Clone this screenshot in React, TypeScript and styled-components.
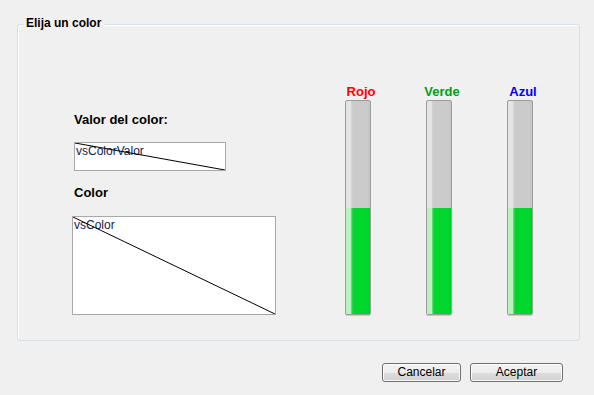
import React from "react";
import styled, { createGlobalStyle } from "styled-components";

const Global = createGlobalStyle`
  html, body { margin: 0; padding: 0; background: #f0f0f0; }
  body { font-family: "Liberation Sans", Arial, sans-serif; }
`;

const Page = styled.div`
  width: 594px;
  height: 395px;
  box-sizing: border-box;
  padding: 24px 0 0 17px;
  background: #f0f0f0;
  display: flex;
  flex-direction: column;
`;

const GroupBox = styled.div`
  position: relative;
  width: 563px;
  height: 317px;
  box-sizing: border-box;
  border: 1px solid #d5dfe5;
  border-radius: 3px;
  box-shadow: inset 1px 1px 0 #ffffff;
  display: flex;
  align-items: flex-start;
`;

const Legend = styled.div`
  position: absolute;
  left: 5px;
  top: -9px;
  padding: 0 3px;
  background: #f0f0f0;
  font-size: 12px;
  font-weight: bold;
  line-height: 15px;
  color: #000;
`;

const LeftColumn = styled.div`
  display: flex;
  flex-direction: column;
  align-items: flex-start;
  padding: 87px 0 0 54px;
`;

const FieldTitle = styled.div<{ $gap: number }>`
  margin: ${(p) => p.$gap}px 0 0 2px;
  font-size: 13px;
  font-weight: bold;
  line-height: 16px;
  color: #000;
`;

const DrawBox = styled.div<{ $w: number; $h: number; $indent: number; $gap: number }>`
  position: relative;
  width: ${(p) => p.$w}px;
  height: ${(p) => p.$h}px;
  box-sizing: border-box;
  margin: ${(p) => p.$gap}px 0 0 ${(p) => p.$indent}px;
  border: 1px solid #a8a8a8;
  background: #ffffff;
`;

const BoxText = styled.span`
  display: block;
  padding: 1px 0 0 1px;
  font-size: 12px;
  line-height: 14px;
  color: #14234a;
`;

const Diagonal = styled.svg`
  position: absolute;
  inset: 0;
  width: 100%;
  height: 100%;
`;

const Bars = styled.div`
  display: flex;
  gap: 55px;
  margin-left: 69px;
  padding-top: 59px;
`;

const BarColumn = styled.div`
  width: 26px;
  display: flex;
  flex-direction: column;
  align-items: center;
`;

const BarLabel = styled.div<{ $color: string }>`
  white-space: nowrap;
  font-size: 13px;
  font-weight: bold;
  line-height: 16px;
  color: ${(p) => p.$color};
  transform: translateX(3px);
`;

const BarTrack = styled.div`
  width: 26px;
  height: 215px;
  box-sizing: border-box;
  border: 1px solid #9c9c9c;
  border-radius: 2px;
  box-shadow: 0 1px 0 #c8c8c8;
  display: flex;
  flex-direction: column;
  overflow: hidden;
  background: linear-gradient(to right, #e4e4e4 0, #e4e4e4 5px, #d6d6d6 5px, #cbcbcb 7px, #cbcbcb 22px, #c2c2c2 100%);
`;

const BarEmpty = styled.div`
  flex: 1;
`;

const BarFill = styled.div`
  background: linear-gradient(to right, #b6f3bd 0, #b6f3bd 5px, #6fe484 5px, #00d62e 7px, #00d62e 22px, #00c82b 100%);
`;

const ButtonRow = styled.div`
  display: flex;
  justify-content: flex-end;
  gap: 9px;
  padding-right: 31px;
  margin-top: 22px;
`;

const Button = styled.button<{ $w: number }>`
  width: ${(p) => p.$w}px;
  height: 19px;
  box-sizing: border-box;
  padding: 0;
  border: 1px solid #707070;
  border-radius: 3px;
  background: linear-gradient(to bottom, #f4f4f4 0%, #ececec 50%, #dddddd 51%, #d2d2d2 100%);
  box-shadow: inset 0 0 0 1px #fbfbfb;
  font-family: "Liberation Sans", Arial, sans-serif;
  font-size: 12px;
  line-height: 15px;
  color: #000;
`;

const channels = [
  { name: "Rojo", color: "#ff0000", value: 50 },
  { name: "Verde", color: "#00a010", value: 50 },
  { name: "Azul", color: "#0000ff", value: 50 },
];

function CrossedBox(props: { w: number; h: number; indent: number; gap: number; text: string }) {
  return (
    <DrawBox $w={props.w} $h={props.h} $indent={props.indent} $gap={props.gap}>
      <Diagonal viewBox="0 0 100 100" preserveAspectRatio="none">
        <line x1="0" y1="0" x2="100" y2="100" stroke="#000" strokeWidth="1" vectorEffect="non-scaling-stroke" />
      </Diagonal>
      <BoxText>{props.text}</BoxText>
    </DrawBox>
  );
}

export default function App() {
  return (
    <>
      <Global />
      <Page>
        <GroupBox>
          <Legend>Elija un color</Legend>
          <LeftColumn>
            <FieldTitle $gap={0}>Valor del color:</FieldTitle>
            <CrossedBox w={152} h={29} indent={2} gap={14} text="vsColorValor" />
            <FieldTitle $gap={14}>Color</FieldTitle>
            <CrossedBox w={204} h={99} indent={0} gap={15} text="vsColor" />
          </LeftColumn>
          <Bars>
            {channels.map((c) => (
              <BarColumn key={c.name}>
                <BarLabel $color={c.color}>{c.name}</BarLabel>
                <BarTrack>
                  <BarEmpty />
                  <BarFill style={{ height: `${c.value}%` }} />
                </BarTrack>
              </BarColumn>
            ))}
          </Bars>
        </GroupBox>
        <ButtonRow>
          <Button $w={79}>Cancelar</Button>
          <Button $w={93}>Aceptar</Button>
        </ButtonRow>
      </Page>
    </>
  );
}
